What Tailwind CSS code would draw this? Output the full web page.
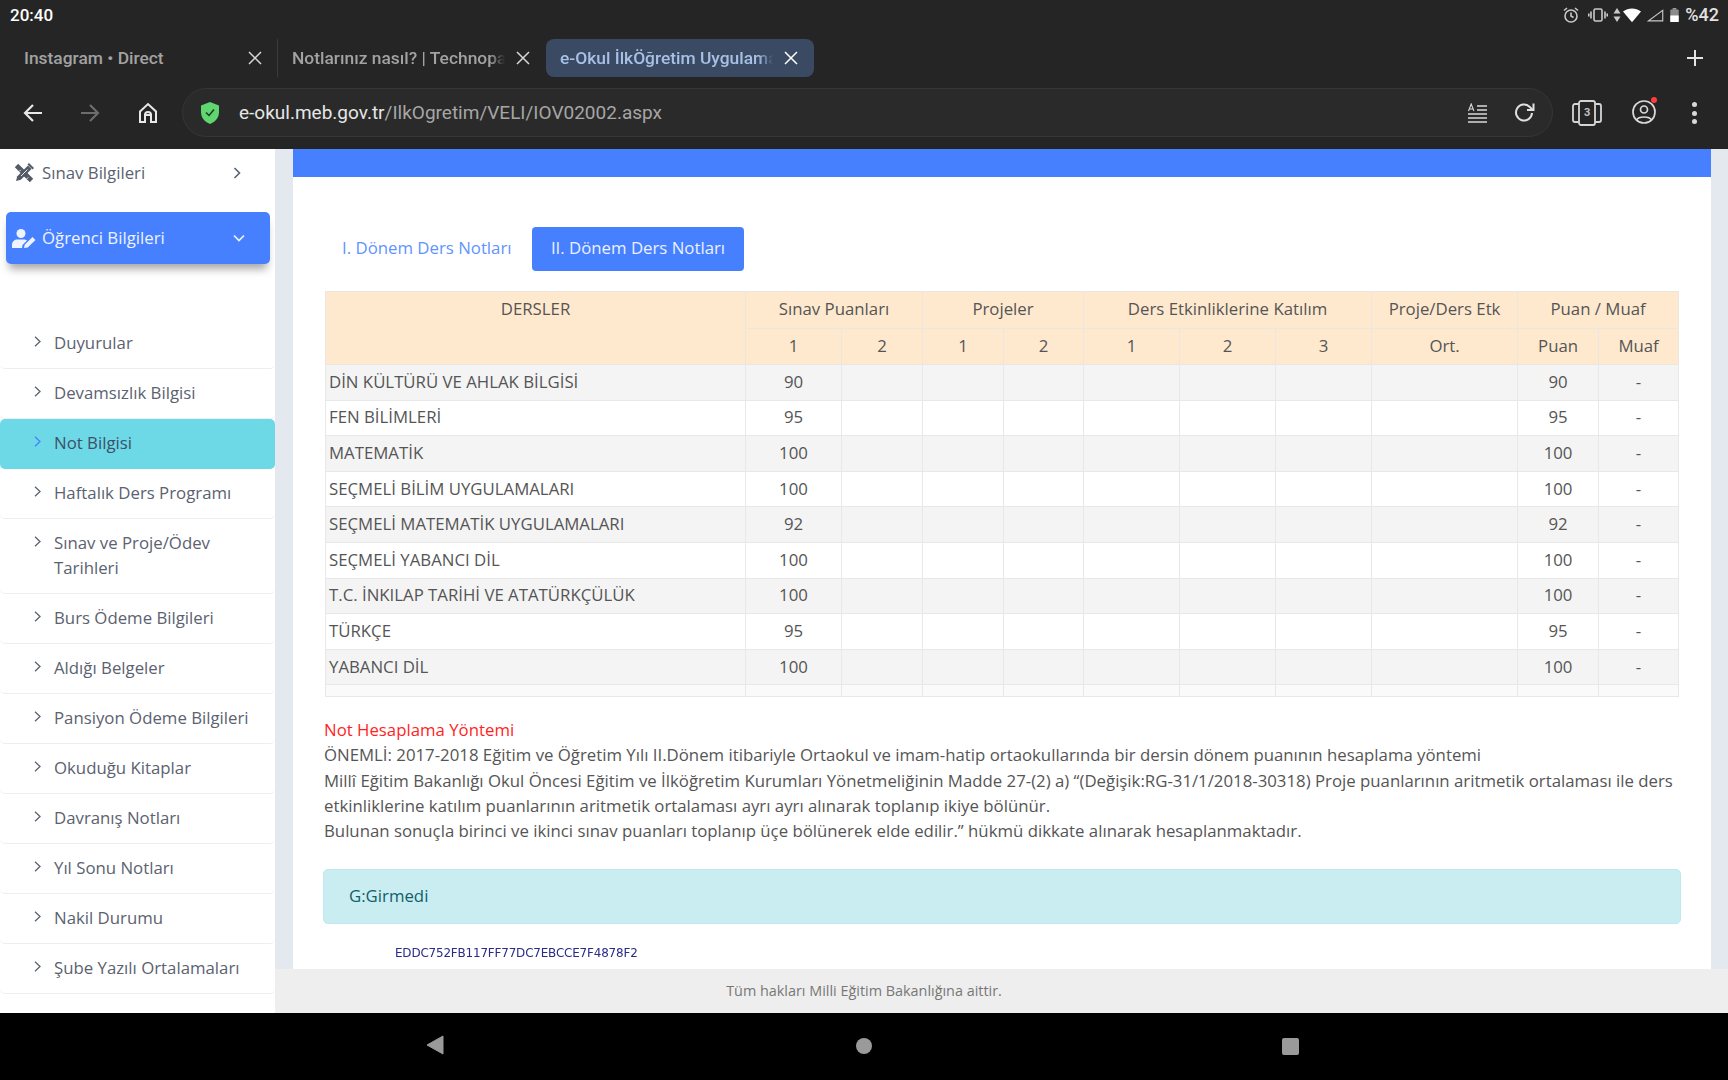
<!doctype html>
<html lang="tr">
<head>
<meta charset="utf-8">
<script src="https://cdn.jsdelivr.net/npm/@tailwindcss/browser@4"></script>
</head>
<body class="w-[1728px] h-[1080px] overflow-hidden flex flex-col bg-black font-['Open_Sans',sans-serif]">

<!-- Browser chrome -->
<header class="h-[149px] shrink-0 bg-[#252525] flex flex-col font-['Roboto',sans-serif]">
  <div class="h-[29px] flex items-center justify-between pl-[10px] pr-[9px] pt-[1px]">
    <span class="text-[17px] font-medium text-white leading-none">20:40</span>
    <div class="flex items-center text-[#c9c9c9]">
      <svg class="w-[18px] h-[18px]" viewBox="0 0 18 18" fill="none" stroke="currentColor" stroke-width="1.6"><circle cx="9" cy="10" r="6"/><path d="M9 6.5V10l2.5 1.5M2 4.5 5 2M16 4.5 13 2"/></svg>
      <svg class="w-[20px] h-[18px] ml-[8px]" viewBox="0 0 20 18" fill="none" stroke="currentColor" stroke-width="1.6"><rect x="6" y="3" width="8" height="12" rx="1.5"/><path d="M3 5.5v7M17 5.5v7M.8 7.5v3M19.200 7.500v3"/></svg>
      <svg class="w-[8px] h-[16px] ml-[5px]" viewBox="0 0 8 16" fill="currentColor"><path d="M4 1 7.500 6.500H.5zM4 15 .5 9.500h7z"/></svg>
      <svg class="w-[18px] h-[15px] ml-[2px] text-white" viewBox="0 0 20 16" fill="currentColor"><path d="M0 3.500C6-1 14-1 20 3.500L10 15.500z"/></svg>
      <svg class="w-[17px] h-[13px] ml-[6px]" viewBox="0 0 18 14" fill="none" stroke="currentColor" stroke-width="1.200"><path d="M16.800 1.500V12.800H1.500z"/></svg>
      <svg class="w-[9px] h-[14px] ml-[6px]" viewBox="0 0 9 15"><rect x="2.500" y="0" width="4" height="2" fill="#9a9a9a"/><rect x="0" y="1.500" width="9" height="13.500" rx="1" fill="#8b8b8b"/><rect x="0" y="8" width="9" height="7" fill="#fff"/></svg>
      <span class="text-[18px] font-medium text-[#e2e2e2] ml-[6px] leading-none">%42</span>
    </div>
  </div>
  <div class="h-[58px] flex items-center relative text-[17.400px] font-medium">
    <div class="w-[278px] h-[38px] pl-[24px] pr-[15px] flex items-center justify-between text-[#a2a2a2] border-r border-[#3a3a3a]">
      <span>Instagram • Direct</span>
      <svg class="w-[14px] h-[14px] text-[#d8d8d8]" viewBox="0 0 14 14" fill="none" stroke="currentColor" stroke-width="1.500"><path d="M1 1l12 12M13 1 1 13"/></svg>
    </div>
    <div class="w-[268px] h-[38px] pl-[14px] pr-[16px] flex items-center gap-[11px] text-[#a2a2a2]">
      <span class="w-[213px] overflow-hidden whitespace-nowrap [mask-image:linear-gradient(to_right,black_93%,transparent)]">Notlarınız nasıl? | Technopat</span>
      <svg class="w-[14px] h-[14px] shrink-0 text-[#d8d8d8]" viewBox="0 0 14 14" fill="none" stroke="currentColor" stroke-width="1.500"><path d="M1 1l12 12M13 1 1 13"/></svg>
    </div>
    <div class="w-[268px] h-[38px] pl-[14px] pr-[14px] flex items-center gap-[11px] bg-[#3a4a63] rounded-[8px] text-[#a9c0e6]">
      <span class="w-[213px] overflow-hidden whitespace-nowrap [mask-image:linear-gradient(to_right,black_93%,transparent)]">e-Okul İlkÖğretim Uygulama</span>
      <svg class="w-[14px] h-[14px] shrink-0 text-white" viewBox="0 0 14 14" fill="none" stroke="currentColor" stroke-width="1.500"><path d="M1 1l12 12M13 1 1 13"/></svg>
    </div>
    <svg class="w-[18px] h-[18px] ml-auto mr-[24px] text-[#e5e5e5]" viewBox="0 0 18 18" fill="none" stroke="currentColor" stroke-width="2"><path d="M9 1v16M1 9h16"/></svg>
  </div>
  <div class="flex-1 flex items-center pb-[11px]">
    <div class="w-[182px] shrink-0 relative h-[49px] flex items-center">
      <svg class="absolute left-[23px] w-[20px] h-[20px] text-[#e8e8e8]" viewBox="0 0 20 20" fill="none" stroke="currentColor" stroke-width="2.200"><path d="M19 10H2M10 2l-8 8 8 8"/></svg>
      <svg class="absolute left-[80px] w-[20px] h-[20px] text-[#6d6d6d]" viewBox="0 0 20 20" fill="none" stroke="currentColor" stroke-width="2.200"><path d="M1 10h17M10 2l8 8-8 8"/></svg>
      <svg class="absolute left-[137px] w-[22px] h-[22px] text-[#e8e8e8]" viewBox="0 0 22 22" fill="none" stroke="currentColor" stroke-width="2"><path d="M3 9.500 11 2l8 7.500V20h-5v-7H8v7H3z"/><path d="M8 13c0-4 6-4 6 0"/></svg>
    </div>
    <div class="w-[1371px] h-[49px] rounded-full bg-[#2a2a2a] border border-[#363636] flex items-center pl-[18px] pr-[16px] relative">
      <svg class="w-[18px] h-[22px] shrink-0" viewBox="0 0 18 22"><path d="M9 0 18 3.500V10c0 5.500-3.500 9.800-9 12C3.500 19.800 0 15.500 0 10V3.500z" fill="#5fd66f"/><path d="m5 10.500 3 3 5-6" fill="none" stroke="#1e3a22" stroke-width="1.500"/></svg>
      <span class="ml-[20px] text-[19px] text-[#a6a6a6] whitespace-nowrap translate-y-px"><span class="text-[#e6e6e6]">e-okul.meb.gov.tr</span>/IlkOgretim/VELI/IOV02002.aspx</span>
      <svg class="ml-auto w-[21px] h-[20px] text-[#d9d9d9]" viewBox="0 0 21 20" fill="none" stroke="currentColor" stroke-width="1.600"><path d="M10 3h10M10 7h10M1 11h19M1 15h19M1 19h19"/><path d="m1.500 8 2.700-7 2.700 7M2.700 6h3" stroke-width="1.100"/></svg>
      <svg class="ml-[26px] mr-[1px] w-[21px] h-[21px] text-[#e0e0e0]" viewBox="0 0 21 21" fill="none" stroke="currentColor" stroke-width="2"><path d="M18 11a8 8 0 1 1-2.500-6.300L19 8"/><path d="M19.500 1.500V8H13" fill="none"/></svg>
    </div>
    <div class="flex-1 relative h-[49px]">
      <svg class="absolute left-[19px] top-[12px] w-[30px] h-[26px] text-[#d4d4d4]" viewBox="0 0 30 26" fill="none" stroke="currentColor" stroke-width="1.800"><rect x="7" y="1" width="16" height="24" rx="2"/><path d="M7 4H3a2 2 0 0 0-2 2v14a2 2 0 0 0 2 2h4M23 4h4a2 2 0 0 1 2 2v14a2 2 0 0 1-2 2h-4"/></svg>
      <span class="absolute left-[31px] top-[17px] text-[11px] leading-[16px] font-bold text-[#c4c4c4]">3</span>
      <svg class="absolute left-[79px] top-[12px] w-[24px] h-[24px] text-[#d9d9d9]" viewBox="0 0 24 24" fill="none" stroke="currentColor" stroke-width="1.700"><circle cx="12" cy="12" r="11"/><circle cx="12" cy="9.500" r="3.500"/><path d="M4.500 20c2-4 13-4 15 0"/></svg>
      <span class="absolute left-[98px] top-[9px] w-[6px] h-[6px] rounded-full bg-[#ff3b3b]"></span>
      <div class="absolute left-[139px] top-[14px] flex flex-col gap-[3.500px]">
        <span class="w-[5px] h-[5px] rounded-full bg-[#d9d9d9]"></span><span class="w-[5px] h-[5px] rounded-full bg-[#d9d9d9]"></span><span class="w-[5px] h-[5px] rounded-full bg-[#d9d9d9]"></span>
      </div>
    </div>
  </div>
</header>

<!-- Page -->
<div class="h-[864px] shrink-0 flex bg-[#e4e8ef] text-[16.800px] leading-[25px]">
  <aside class="w-[275px] shrink-0 bg-white overflow-hidden text-[#5b6270]">
    <div class="h-[47px] flex items-center pl-[14px] pr-[34px]">
      <svg class="w-[20px] h-[20px] text-[#555b66]" viewBox="0 0 20 20" fill="currentColor"><path d="M.8 4.200 4.200.8 19.200 15.800 15.800 19.200z"/><path d="M2 18l1.300-4.800L14 2.500l3.500 3.500L6.800 16.700z"/><path d="M13.500 1.500 15 0l5 5-1.500 1.500z"/><path d="m5.300 8.300 1.400-1.400M12.800 15.800l1.400-1.400" stroke="#fff" stroke-width="1"/><path d="m7 13 6.500-6.500" stroke="#fff" stroke-width=".9"/></svg>
      <span class="ml-[8px]">Sınav Bilgileri</span>
      <svg class="ml-auto w-[8px] h-[12px]" viewBox="0 0 8 12" fill="none" stroke="currentColor" stroke-width="1.600"><path d="m1.500 1 5 5-5 5"/></svg>
    </div>
    <div class="mx-[6px] mt-[16px] w-[264px] h-[52px] rounded-[5px] bg-[#4680ff] text-[#eef3ff] flex items-center pl-[6px] pr-[25px] shadow-[0_8px_8px_-3px_rgba(0,0,0,0.35)]">
      <svg class="w-[24px] h-[19px] shrink-0" viewBox="0 0 24 19" fill="currentColor"><circle cx="9" cy="4.500" r="4.500"/><path d="M0 19v-3c0-3.500 2.500-5.500 5.500-5.500h6c1.500 0 2.500.3 3.500 1L10.500 16l-.5 3z"/><path d="m12 19 .7-3.200L20.500 8l3 3-7.800 7.500z"/></svg>
      <span class="ml-[6px] pb-[1px]">Öğrenci Bilgileri</span>
      <svg class="ml-auto w-[12px] h-[8px]" viewBox="0 0 12 8" fill="none" stroke="currentColor" stroke-width="1.700"><path d="m1 1.500 5 5 5-5"/></svg>
    </div>
    <ul class="mt-[55px] [&_li]:flex [&_li]:pl-[34px] [&_li]:pt-[11px] [&_li]:pb-[13px] [&_li]:border-b [&_li]:border-[#eeeeee] [&_li]:rounded-[5px] [&_svg]:w-[7px] [&_svg]:h-[11px] [&_svg]:mt-[6px] [&_svg]:mr-[13px] [&_svg]:shrink-0">
      <li><svg viewBox="0 0 7 11" fill="none" stroke="currentColor" stroke-width="1.300"><path d="m1 .8 5 4.700-5 4.700"/></svg>Duyurular</li>
      <li><svg viewBox="0 0 7 11" fill="none" stroke="currentColor" stroke-width="1.300"><path d="m1 .8 5 4.700-5 4.700"/></svg>Devamsızlık Bilgisi</li>
      <li class="bg-[#6dd9e6] text-[#3c5069] !border-[#6dd9e6]"><svg class="text-[#4680ff]" viewBox="0 0 7 11" fill="none" stroke="currentColor" stroke-width="1.300"><path d="m1 .8 5 4.700-5 4.700"/></svg>Not Bilgisi</li>
      <li><svg viewBox="0 0 7 11" fill="none" stroke="currentColor" stroke-width="1.300"><path d="m1 .8 5 4.700-5 4.700"/></svg>Haftalık Ders Programı</li>
      <li><svg viewBox="0 0 7 11" fill="none" stroke="currentColor" stroke-width="1.300"><path d="m1 .8 5 4.700-5 4.700"/></svg><span>Sınav ve Proje/Ödev<br>Tarihleri</span></li>
      <li><svg viewBox="0 0 7 11" fill="none" stroke="currentColor" stroke-width="1.300"><path d="m1 .8 5 4.700-5 4.700"/></svg>Burs Ödeme Bilgileri</li>
      <li><svg viewBox="0 0 7 11" fill="none" stroke="currentColor" stroke-width="1.300"><path d="m1 .8 5 4.700-5 4.700"/></svg>Aldığı Belgeler</li>
      <li><svg viewBox="0 0 7 11" fill="none" stroke="currentColor" stroke-width="1.300"><path d="m1 .8 5 4.700-5 4.700"/></svg>Pansiyon Ödeme Bilgileri</li>
      <li><svg viewBox="0 0 7 11" fill="none" stroke="currentColor" stroke-width="1.300"><path d="m1 .8 5 4.700-5 4.700"/></svg>Okuduğu Kitaplar</li>
      <li><svg viewBox="0 0 7 11" fill="none" stroke="currentColor" stroke-width="1.300"><path d="m1 .8 5 4.700-5 4.700"/></svg>Davranış Notları</li>
      <li><svg viewBox="0 0 7 11" fill="none" stroke="currentColor" stroke-width="1.300"><path d="m1 .8 5 4.700-5 4.700"/></svg>Yıl Sonu Notları</li>
      <li><svg viewBox="0 0 7 11" fill="none" stroke="currentColor" stroke-width="1.300"><path d="m1 .8 5 4.700-5 4.700"/></svg>Nakil Durumu</li>
      <li><svg viewBox="0 0 7 11" fill="none" stroke="currentColor" stroke-width="1.300"><path d="m1 .8 5 4.700-5 4.700"/></svg>Şube Yazılı Ortalamaları</li>
    </ul>
  </aside>

  <div class="flex-1 min-w-0 flex flex-col">
    <div class="h-[820px] overflow-hidden pl-[18px] pr-[17px]">
      <main class="bg-white h-full text-[#555555]">
        <div class="h-[28px] bg-[#4680ff]"></div>
        <div class="pt-[50px] pl-[32px] flex items-center">
          <a class="w-[207px] pl-[17px] -translate-y-[2px] text-[#5f93ff]">I. Dönem Ders Notları</a>
          <a class="h-[44px] w-[212px] rounded-[4px] bg-[#4680ff] text-[#eaf1ff] flex items-center justify-center pb-[4px]">II. Dönem Ders Notları</a>
        </div>
        <table class="mt-[20px] ml-[32px] w-[1353px] table-fixed border-collapse [&_th]:border [&_th]:border-[#ebe6df] [&_th]:bg-[#fee9cf] [&_th]:font-normal [&_th]:h-[36.500px] [&_th]:p-0 [&_th]:pb-[2px] [&_td]:border [&_td]:border-[#e8e8e8] [&_td]:text-center [&_td]:p-0 [&_td]:pb-[2px] [&_td]:h-[35.600px]">
          <colgroup>
            <col class="w-[420px]"><col class="w-[96px]"><col class="w-[81px]"><col class="w-[81px]"><col class="w-[80px]"><col class="w-[96px]"><col class="w-[96px]"><col class="w-[96px]"><col class="w-[146px]"><col class="w-[81px]"><col class="w-[80px]">
          </colgroup>
          <thead>
            <tr><th rowspan="2" class="align-top !pt-[4px]">DERSLER</th><th colspan="2">Sınav Puanları</th><th colspan="2">Projeler</th><th colspan="3">Ders Etkinliklerine Katılım</th><th>Proje/Ders Etk</th><th colspan="2">Puan / Muaf</th></tr>
            <tr><th>1</th><th>2</th><th>1</th><th>2</th><th>1</th><th>2</th><th>3</th><th>Ort.</th><th>Puan</th><th>Muaf</th></tr>
          </thead>
          <tbody class="[&_tr:nth-child(odd)]:bg-[#f4f4f4] [&_td:first-child]:text-left [&_td:first-child]:pl-[3px]">
            <tr><td>DİN KÜLTÜRÜ VE AHLAK BİLGİSİ</td><td>90</td><td></td><td></td><td></td><td></td><td></td><td></td><td></td><td>90</td><td>-</td></tr>
            <tr><td>FEN BİLİMLERİ</td><td>95</td><td></td><td></td><td></td><td></td><td></td><td></td><td></td><td>95</td><td>-</td></tr>
            <tr><td>MATEMATİK</td><td>100</td><td></td><td></td><td></td><td></td><td></td><td></td><td></td><td>100</td><td>-</td></tr>
            <tr><td>SEÇMELİ BİLİM UYGULAMALARI</td><td>100</td><td></td><td></td><td></td><td></td><td></td><td></td><td></td><td>100</td><td>-</td></tr>
            <tr><td>SEÇMELİ MATEMATİK UYGULAMALARI</td><td>92</td><td></td><td></td><td></td><td></td><td></td><td></td><td></td><td>92</td><td>-</td></tr>
            <tr><td>SEÇMELİ YABANCI DİL</td><td>100</td><td></td><td></td><td></td><td></td><td></td><td></td><td></td><td>100</td><td>-</td></tr>
            <tr><td>T.C. İNKILAP TARİHİ VE ATATÜRKÇÜLÜK</td><td>100</td><td></td><td></td><td></td><td></td><td></td><td></td><td></td><td>100</td><td>-</td></tr>
            <tr><td>TÜRKÇE</td><td>95</td><td></td><td></td><td></td><td></td><td></td><td></td><td></td><td>95</td><td>-</td></tr>
            <tr><td>YABANCI DİL</td><td>100</td><td></td><td></td><td></td><td></td><td></td><td></td><td></td><td>100</td><td>-</td></tr>
            <tr class="!bg-[#fafafa] [&_td]:!h-[12px]"><td></td><td></td><td></td><td></td><td></td><td></td><td></td><td></td><td></td><td></td><td></td></tr>
          </tbody>
        </table>
        <div class="mt-[19.600px] ml-[31px] leading-[25.300px] w-[1359px]">
          <p class="text-[#ff1f1f]">Not Hesaplama Yöntemi</p>
          <p>ÖNEMLİ: 2017-2018 Eğitim ve Öğretim Yılı II.Dönem itibariyle Ortaokul ve imam-hatip ortaokullarında bir dersin dönem puanının hesaplama yöntemi</p>
          <p>Millî Eğitim Bakanlığı Okul Öncesi Eğitim ve İlköğretim Kurumları Yönetmeliğinin Madde 27-(2) a) “(Değişik:RG-31/1/2018-30318) Proje puanlarının aritmetik ortalaması ile ders etkinliklerine katılım puanlarının aritmetik ortalaması ayrı ayrı alınarak toplanıp ikiye bölünür.</p>
          <p>Bulunan sonuçla birinci ve ikinci sınav puanları toplanıp üçe bölünerek elde edilir.” hükmü dikkate alınarak hesaplanmaktadır.</p>
        </div>
        <div class="mt-[25.400px] ml-[30px] w-[1358px] h-[55px] rounded-[5px] bg-[#caedf2] border border-[#bfe7ee] text-[#0f5f6b] flex items-center pl-[25px] pb-[2px]">G:Girmedi</div>
        <p class="mt-[20px] ml-[102px] text-[13px] leading-[18px] tracking-[-0.2px] text-[#2c2a86] font-['DejaVu_Sans',sans-serif] scale-x-[0.92] origin-left">EDDC752FB117FF77DC7EBCCE7F4878F2</p>
      </main>
    </div>
    <footer class="h-[44px] bg-[#eeeeee] text-[14.400px] text-[#777777] flex items-center justify-center pr-[275px] pb-[2px]">Tüm hakları Milli Eğitim Bakanlığına aittir.</footer>
  </div>
</div>

<!-- Android nav -->
<nav class="flex-1 bg-black relative">
  <svg class="absolute left-[426px] top-[22px] w-[18px] h-[20px]" viewBox="0 0 18 20" fill="#9a9a9a"><path d="M17 1v18L1 10z" stroke="#9a9a9a" stroke-linejoin="round"/></svg>
  <span class="absolute left-[856px] top-[25px] w-[16px] h-[16px] rounded-full bg-[#9a9a9a]"></span>
  <span class="absolute left-[1282px] top-[25px] w-[17px] h-[17px] rounded-[2px] bg-[#9a9a9a]"></span>
</nav>
</body>
</html>
